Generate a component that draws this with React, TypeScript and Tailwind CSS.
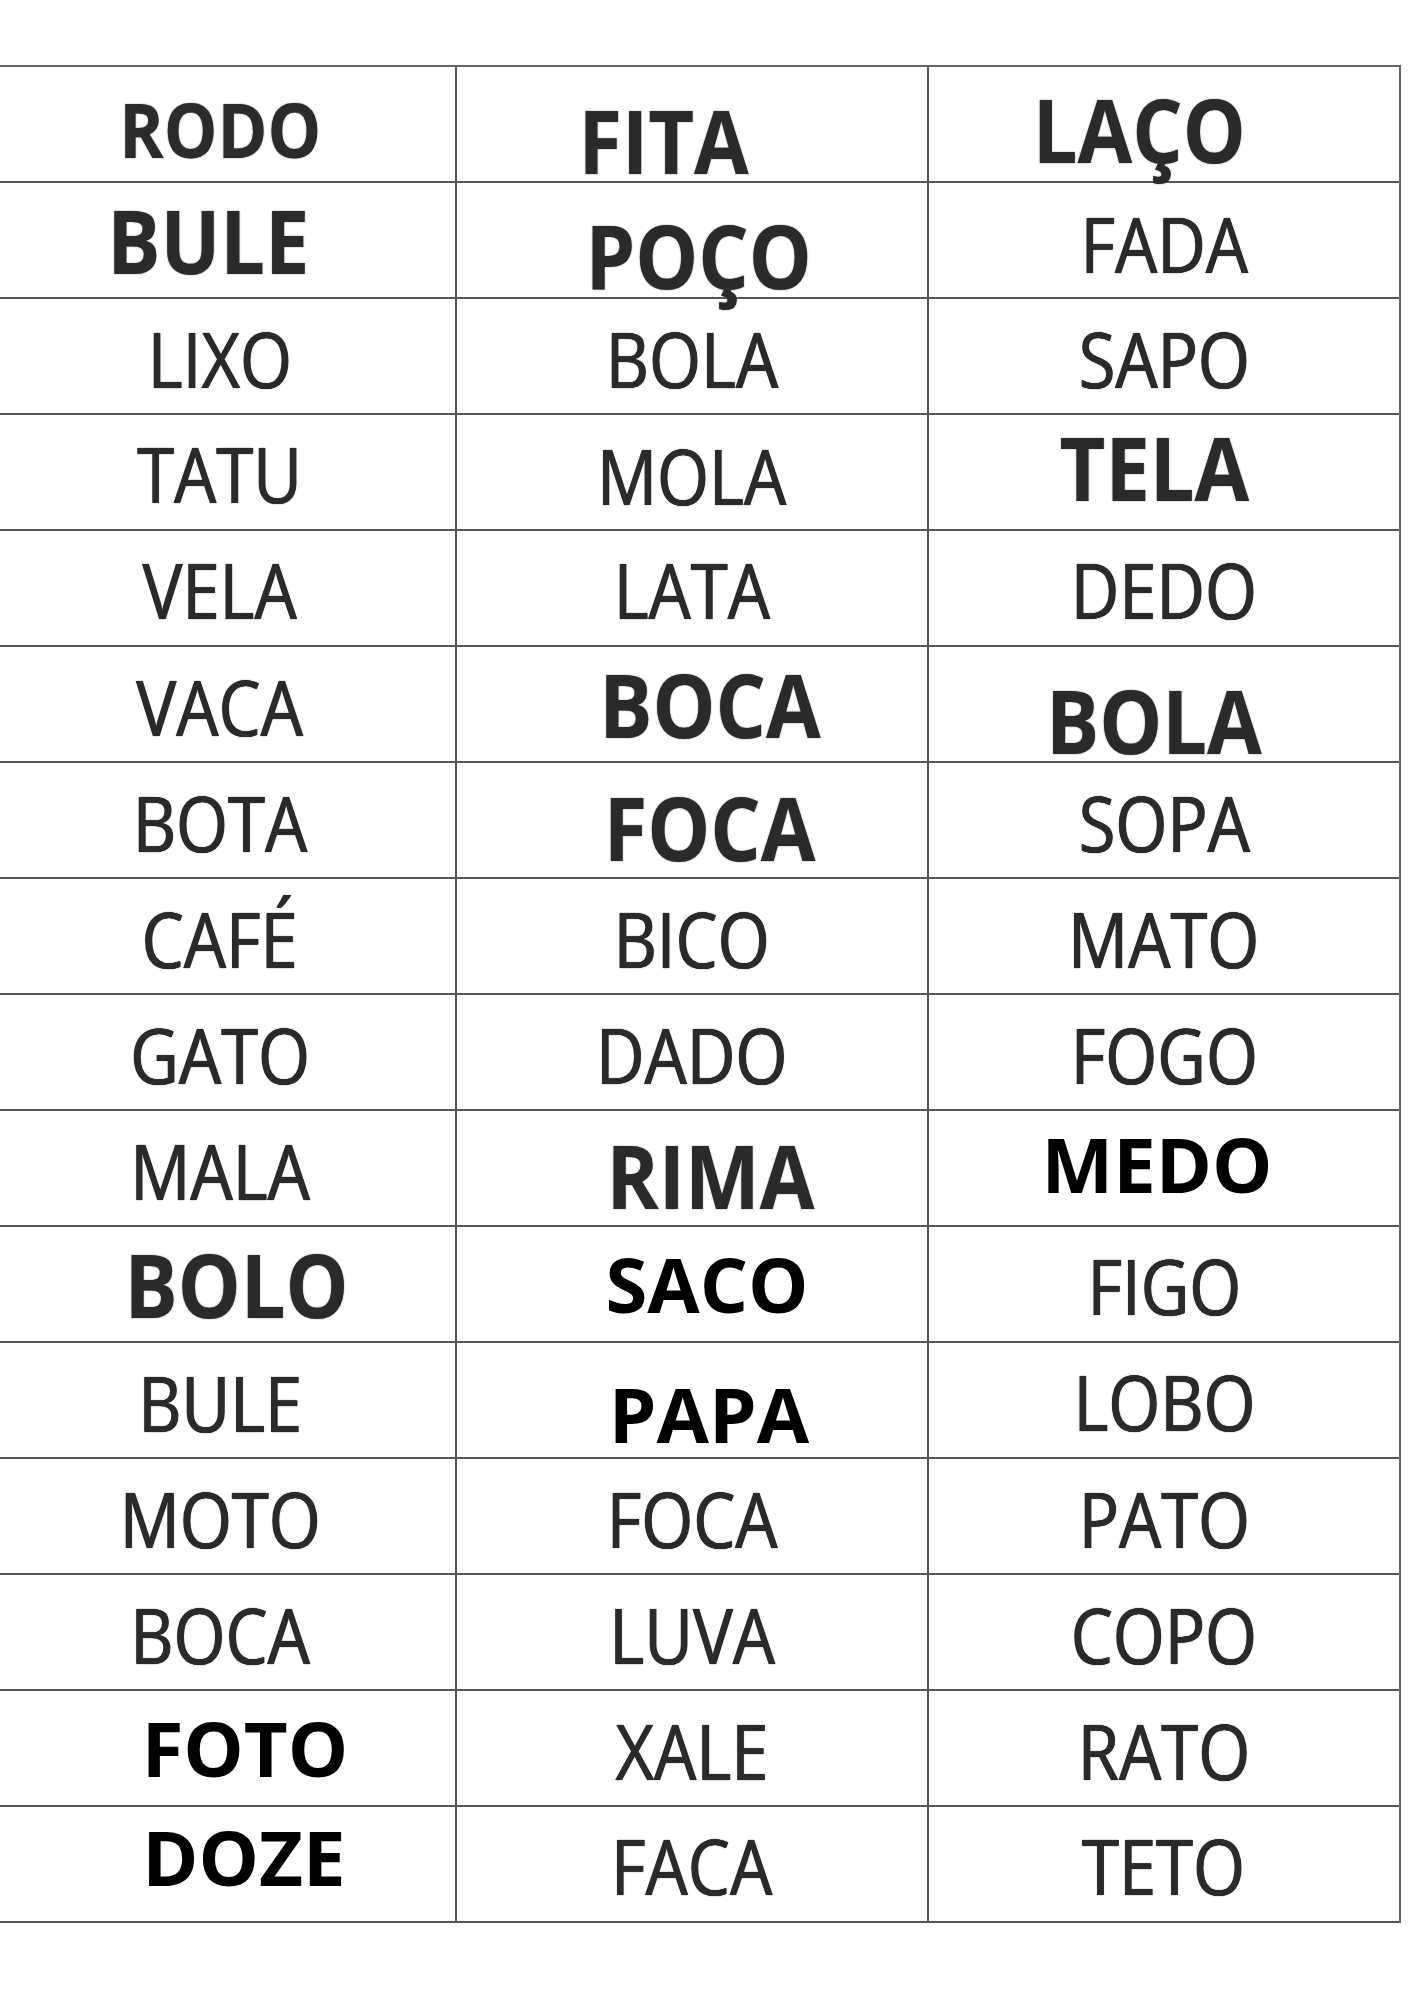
type Kind = "r" | "s" | "b" | "k";
type Cell = [string, Kind, string];

const rows: Cell[][] = [
  [["RODO", "s", "mt-[10px]"], ["FITA", "b", "mr-[56px] mt-[32px]"], ["LAÇO", "b", "mr-[50px] mt-[10px]"]],
  [["BULE", "b", "mr-[24px]"], ["POÇO", "b", "ml-[14px] mt-[30px]"], ["FADA", "r", "mt-[8px]"]],
  [["LIXO", "r", "mt-[6px]"], ["BOLA", "r", "mt-[6px]"], ["SAPO", "r", "mt-[6px]"]],
  [["TATU", "r", "mt-[4px]"], ["MOLA", "r", "mt-[8px]"], ["TELA", "b", "mr-[20px] mb-[10px]"]],
  [["VELA", "r", "mt-[4px]"], ["LATA", "r", "mt-[4px]"], ["DEDO", "r", "mt-[4px]"]],
  [["VACA", "r", "mt-[6px]"], ["BOCA", "b", "ml-[36px]"], ["BOLA", "b", "mr-[20px] mt-[32px]"]],
  [["BOTA", "r", "mt-[6px]"], ["FOCA", "b", "ml-[36px] mt-[14px]"], ["SOPA", "r", "mt-[6px]"]],
  [["CAFÉ", "r", "mt-[6px]"], ["BICO", "r", "mt-[6px]"], ["MATO", "r", "mt-[6px]"]],
  [["GATO", "r", "mt-[6px]"], ["DADO", "r", "mt-[6px]"], ["FOGO", "r", "mt-[6px]"]],
  [["MALA", "r", "mt-[6px]"], ["RIMA", "b", "ml-[36px] mt-[14px]"], ["MEDO", "k", "mr-[14px] mb-[8px]"]],
  [["BOLO", "b", "ml-[32px]"], ["SACO", "k", "ml-[30px]"], ["FIGO", "r", "mt-[4px]"]],
  [["BULE", "r", "mt-[6px]"], ["PAPA", "k", "ml-[34px] mt-[28px]"], ["LOBO", "r", "mt-[4px]"]],
  [["MOTO", "r", "mt-[6px]"], ["FOCA", "r", "mt-[6px]"], ["PATO", "r", "mt-[6px]"]],
  [["BOCA", "r", "mt-[6px]"], ["LUVA", "r", "mt-[6px]"], ["COPO", "r", "mt-[6px]"]],
  [["FOTO", "k", "ml-[50px]"], ["XALE", "r", "mt-[6px]"], ["RATO", "r", "mt-[6px]"]],
  [["DOZE", "k", "ml-[48px] mb-[14px]"], ["FACA", "r", "mt-[4px]"], ["TETO", "r", "mt-[4px]"]],
];

const kindClass: Record<Kind, string> = {
  r: "text-[76px] font-normal text-[#2a2a2a] scale-x-[0.88] [text-shadow:0.6px_0_0_#2a2a2a,-0.6px_0_0_#2a2a2a,0_0_1.5px_#555]",
  s: "text-[75px] font-bold text-[#2b2b2b] scale-x-[0.9] [text-shadow:0_0_1.5px_#666]",
  b: "text-[88px] font-bold text-[#2a2a2a] scale-x-[0.9] [text-shadow:0_0_1.5px_#666]",
  k: "text-[76px] font-bold text-black",
};

export default function App() {
  return (
    <div className="min-h-[2000px] overflow-hidden bg-white pt-[65px] font-['Open_Sans',sans-serif]">
      <div className="-ml-[17px] grid w-[1418px] grid-cols-[472px_472px_472px] border-t-2 border-r-2 border-[#666]">
        {rows.map((row, i) =>
          row.map(([word, kind, offset], j) => (
            <div
              key={`${i}-${j}`}
              className="flex h-[116px] items-center justify-center border-b-2 border-l-2 border-[#555]"
            >
              <span className={`leading-none ${kindClass[kind]} ${offset}`}>
                {word}
              </span>
            </div>
          ))
        )}
      </div>
    </div>
  );
}
